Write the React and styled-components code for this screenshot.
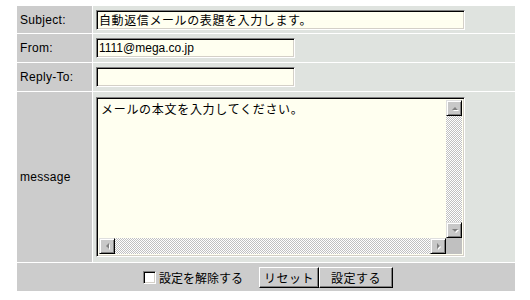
import React from "react";
import styled, { createGlobalStyle } from "styled-components";

const GlobalStyle = createGlobalStyle`
  body {
    margin: 0;
    background: #ffffff;
    font-family: "Liberation Sans", "Noto Sans CJK JP", sans-serif;
    color: #000;
  }
`;

const Page = styled.div`
  padding: 6px 0 0 17px;
`;

const Form = styled.div`
  display: grid;
  grid-template-columns: 75px 422px;
  grid-template-rows: 27px 28px 28px 170px 28px;
  gap: 1px;
  width: 498px;
  background: #ffffff;
`;

const Label = styled.div`
  background: #cccccc;
  display: flex;
  align-items: center;
  padding-left: 3px;
  font-size: 12px;
  letter-spacing: 0.3px;
`;

const Cell = styled.div`
  background: #dfe3df;
  display: flex;
  align-items: center;
  padding-left: 3px;
`;

const TextInput = styled.input`
  box-sizing: border-box;
  width: ${(p) => p.$width}px;
  height: 20px;
  margin: 0;
  padding: 0 2px;
  background: #fffff0;
  border: 1px solid;
  border-color: #808080 #ffffff #ffffff #808080;
  box-shadow: inset 1px 1px 0 #000000, inset -1px -1px 0 #d4d0c8;
  font-family: "Liberation Sans", "Noto Sans CJK JP", sans-serif;
  font-size: 12px;
  letter-spacing: ${(p) => (p.$wide ? "0.6px" : "0")};
  color: #000;
  outline: none;
`;

const AreaBox = styled.div`
  box-sizing: border-box;
  width: 369px;
  height: 160px;
  border: 1px solid;
  border-color: #808080 #ffffff #ffffff #808080;
  box-shadow: inset 1px 1px 0 #000000, inset -1px -1px 0 #d4d0c8;
  padding: 2px;
  background: #fffff0;
  display: grid;
  grid-template-columns: 1fr 16px;
  grid-template-rows: 1fr 16px;
`;

const AreaText = styled.textarea`
  border: none;
  margin: 0;
  padding: 1px 2px;
  resize: none;
  overflow: hidden;
  background: transparent;
  font-family: "Noto Sans CJK JP", sans-serif;
  font-size: 12px;
  line-height: 15px;
  letter-spacing: 0.7px;
  color: #000;
  outline: none;
`;

const Track = styled.div`
  display: flex;
  flex-direction: ${(p) => (p.$vertical ? "column" : "row")};
  justify-content: space-between;
  background: repeating-conic-gradient(#c0c0c0 0 25%, #ffffff 0 50%) 0 0 / 2px 2px;
`;

const ArrowButton = styled.div`
  box-sizing: border-box;
  width: 16px;
  height: 16px;
  background: #c8c8c8;
  border-top: 1px solid #dfdfdf;
  border-left: 1px solid #dfdfdf;
  border-right: 1px solid #000000;
  border-bottom: 1px solid #000000;
  box-shadow: inset 1px 1px 0 #ffffff, inset -1px -1px 0 #808080;
  display: flex;
  align-items: center;
  justify-content: center;
`;

const Corner = styled.div`
  background: #c0c0c0;
`;

const Footer = styled.div`
  grid-column: 1 / span 2;
  background: #cccccc;
  display: flex;
  align-items: center;
  justify-content: center;
  padding-left: 4px;
`;

const CheckLabel = styled.label`
  display: flex;
  align-items: center;
  gap: 3px;
  font-family: "Noto Sans CJK JP", sans-serif;
  font-size: 12px;
  margin-right: 16px;
`;

const CheckBox = styled.span`
  box-sizing: border-box;
  width: 13px;
  height: 13px;
  background: #ffffff;
  border: 1px solid;
  border-color: #808080 #ffffff #ffffff #808080;
  box-shadow: inset 1px 1px 0 #000000, inset -1px -1px 0 #d4d0c8;
`;

const Button = styled.button`
  box-sizing: border-box;
  width: ${(p) => p.$width}px;
  height: 21px;
  margin: 0;
  padding: 0;
  background: #cccccc;
  border: 1px solid;
  border-color: #ffffff #000000 #000000 #ffffff;
  box-shadow: inset -1px -1px 0 #808080;
  font-family: "Noto Sans CJK JP", sans-serif;
  font-size: 12px;
  letter-spacing: 0.5px;
  color: #000;
`;

const arrows = {
  up: "2,6 5,3 8,6",
  down: "2,3 5,6 8,3",
  left: "6,1 3,4 6,7",
  right: "3,1 6,4 3,7",
};

function Arrow({ dir }) {
  return (
    <ArrowButton>
      <svg width="9" height="9" viewBox="0 0 9 9">
        <polygon points={arrows[dir]} fill="#ffffff" transform="translate(1,1)" />
        <polygon points={arrows[dir]} fill="#808080" />
      </svg>
    </ArrowButton>
  );
}

export default function App() {
  return (
    <>
      <GlobalStyle />
      <Page>
        <Form>
          <Label>Subject:</Label>
          <Cell>
            <TextInput $width={369} $wide defaultValue="自動返信メールの表題を入力します。" />
          </Cell>

          <Label>From:</Label>
          <Cell>
            <TextInput $width={199} defaultValue="1111@mega.co.jp" />
          </Cell>

          <Label>Reply-To:</Label>
          <Cell>
            <TextInput $width={199} defaultValue="" />
          </Cell>

          <Label>message</Label>
          <Cell>
            <AreaBox>
              <AreaText defaultValue="メールの本文を入力してください。" />
              <Track $vertical>
                <Arrow dir="up" />
                <Arrow dir="down" />
              </Track>
              <Track>
                <Arrow dir="left" />
                <Arrow dir="right" />
              </Track>
              <Corner />
            </AreaBox>
          </Cell>

          <Footer>
            <CheckLabel>
              <CheckBox />
              設定を解除する
            </CheckLabel>
            <Button $width={60}>リセット</Button>
            <Button $width={74}>設定する</Button>
          </Footer>
        </Form>
      </Page>
    </>
  );
}
